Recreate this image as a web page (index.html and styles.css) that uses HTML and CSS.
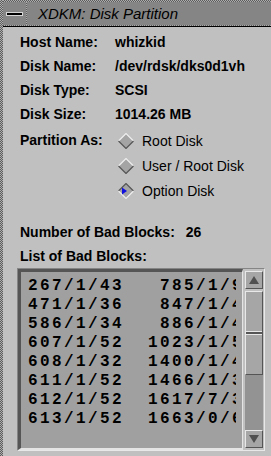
FILE: index.html
```html
<!DOCTYPE html>
<html>
<head>
<meta charset="utf-8">
<link rel="stylesheet" href="styles.css">
</head>
<body>
<div class="window">
  <div class="frame"></div>
  <div class="main">
    <div class="titlebar">
      <div class="close"><span class="minus"></span></div>
      <div class="sep"></div>
      <div class="title">XDKM: Disk Partition</div>
    </div>
    <div class="content">
      <div class="row"><span class="lbl">Host Name:</span><span class="val">whizkid</span></div>
      <div class="row"><span class="lbl">Disk Name:</span><span class="val">/dev/rdsk/dks0d1vh</span></div>
      <div class="row"><span class="lbl">Disk Type:</span><span class="val">SCSI</span></div>
      <div class="row"><span class="lbl">Disk Size:</span><span class="val">1014.26 MB</span></div>
      <div class="partition">
        <span class="lbl">Partition As:</span>
        <div class="radios">
          <div class="radio">
            <svg width="16" height="16" viewBox="0 0 16 16"><polygon points="8,0.5 15.5,8 8,15.5 0.5,8" fill="#a4a4a4"/><polyline points="0.5,8 8,0.5 15.5,8" fill="none" stroke="#eeeeee" stroke-width="1.2"/><polyline points="0.5,8 8,15.5 15.5,8" fill="none" stroke="#555" stroke-width="1.2"/></svg>
            <span>Root Disk</span>
          </div>
          <div class="radio">
            <svg width="16" height="16" viewBox="0 0 16 16"><polygon points="8,0.5 15.5,8 8,15.5 0.5,8" fill="#a4a4a4"/><polyline points="0.5,8 8,0.5 15.5,8" fill="none" stroke="#eeeeee" stroke-width="1.2"/><polyline points="0.5,8 8,15.5 15.5,8" fill="none" stroke="#555" stroke-width="1.2"/></svg>
            <span>User / Root Disk</span>
          </div>
          <div class="radio">
            <svg width="16" height="16" viewBox="0 0 16 16"><polygon points="8,0.5 15.5,8 8,15.5 0.5,8" fill="#a4a4a4"/><polyline points="0.5,8 8,0.5 15.5,8" fill="none" stroke="#555" stroke-width="1.2"/><polyline points="0.5,8 8,15.5 15.5,8" fill="none" stroke="#eeeeee" stroke-width="1.2"/><polygon points="4,4.5 9,8 4,11.5" fill="#1010e0"/></svg>
            <span>Option Disk</span>
          </div>
        </div>
      </div>
      <div class="row count"><span>Number of Bad Blocks:</span><span class="num">26</span></div>
      <div class="row"><span>List of Bad Blocks:</span></div>
      <div class="listbox">
        <div class="list">
          <div class="rows">267/1/43   785/1/9
471/1/36   847/1/4
586/1/34   886/1/4
607/1/52  1023/1/5
608/1/32  1400/1/4
611/1/52  1466/1/3
612/1/52  1617/7/3
613/1/52  1663/0/6</div>
        </div>
        <div class="scrollbar">
          <div class="btn"><span class="up"></span></div>
          <div class="slider"><span class="grip"></span></div>
          <div class="trough"></div>
          <div class="btn"><span class="down"></span></div>
        </div>
      </div>
    </div>
  </div>
</div>
</body>
</html>
```
FILE: styles.css
```css
html, body {
  margin: 0;
  padding: 0;
}
body {
  width: 271px;
  height: 456px;
  overflow: hidden;
  background: #c0c0c0;
  font-family: "Liberation Sans", Arial, Helvetica, sans-serif;
  color: #000;
}
.window {
  display: flex;
  height: 456px;
}
.frame {
  width: 3px;
  flex: none;
  background: repeating-conic-gradient(#5c5c5c 0 25%, #adadad 0 50%) 0 0 / 2px 2px;
}
.main {
  flex: 1;
  min-width: 0;
  display: flex;
  flex-direction: column;
}
.titlebar {
  flex: none;
  display: flex;
  height: 27px;
  box-sizing: border-box;
  padding: 2px 0 1px;
  border-bottom: 1px solid #000;
  background: repeating-conic-gradient(#5c5c5c 0 25%, #adadad 0 50%) 0 0 / 2px 2px;
}
.close {
  width: 23px;
  flex: none;
  background: #858585;
  display: flex;
  align-items: center;
  justify-content: center;
}
.minus {
  width: 15px;
  height: 2px;
  background: #000;
  border: 1px solid #d8d8d8;
}
.sep {
  width: 1px;
  flex: none;
  background: repeating-conic-gradient(#5c5c5c 0 25%, #adadad 0 50%) 0 0 / 2px 2px;
}
.title {
  flex: 1;
  background: #858585;
  font-style: italic;
  font-size: 15px;
  line-height: 23px;
  padding-left: 11px;
  white-space: nowrap;
}
.content {
  flex: 1;
  padding: 3px 0 0 17px;
}
.row {
  display: flex;
  height: 24px;
  line-height: 24px;
  font-size: 14px;
  font-weight: bold;
  white-space: nowrap;
}
.lbl {
  width: 95px;
  flex: none;
}
.partition {
  display: flex;
  margin-top: 2px;
  font-size: 14px;
}
.partition .lbl {
  font-weight: bold;
  line-height: 25px;
}
.radio {
  display: flex;
  align-items: center;
  height: 25px;
  white-space: nowrap;
}
.radio svg {
  margin-left: 3px;
  margin-right: 8px;
  flex: none;
}
.count {
  margin-top: 17px;
}
.num {
  margin-left: 11px;
}
.listbox {
  display: flex;
  gap: 2px;
  box-sizing: border-box;
  width: 248px;
  height: 183px;
  margin-left: -3px;
  border: 1px solid;
  border-color: #858585 #e8e8e8 #e8e8e8 #858585;
  padding: 0 1px 0 0;
}
.list {
  width: 225px;
  box-sizing: border-box;
  flex: none;
  background: #a0a0a0;
  border-style: solid;
  border-width: 3px 1px 2px 3px;
  border-color: #555 #e4e4e4 #e4e4e4 #555;
  padding: 5px 6px 0 7px;
}
.rows {
  overflow: hidden;
  height: 100%;
  white-space: pre;
  font-family: "Liberation Mono", "Courier New", monospace;
  font-weight: bold;
  font-size: 16px;
  letter-spacing: 2.4px;
  line-height: 19px;
}
.scrollbar {
  width: 18px;
  flex: none;
  display: flex;
  flex-direction: column;
  margin: 2px 0 2px;
}
.btn {
  height: 18px;
  flex: none;
  box-sizing: border-box;
  background: #a6a6a6;
  border: 1px solid;
  border-color: #e8e8e8 #555 #555 #e8e8e8;
  display: flex;
  align-items: center;
  justify-content: center;
}
.up {
  width: 0;
  height: 0;
  border-left: 5px solid transparent;
  border-right: 5px solid transparent;
  border-bottom: 8px solid #505050;
}
.down {
  width: 0;
  height: 0;
  border-left: 5px solid transparent;
  border-right: 5px solid transparent;
  border-top: 8px solid #505050;
}
.slider {
  height: 84px;
  flex: none;
  margin-top: 2px;
  box-sizing: border-box;
  background: #a6a6a6;
  border: 1px solid;
  border-color: #e8e8e8 #555 #555 #e8e8e8;
  display: flex;
  align-items: center;
}
.grip {
  width: 100%;
  height: 2px;
  border-top: 1px solid #e8e8e8;
  border-bottom: 1px solid #e8e8e8;
  background: #555;
}
.trough {
  flex: 1;
  background: #939393;
}
```
